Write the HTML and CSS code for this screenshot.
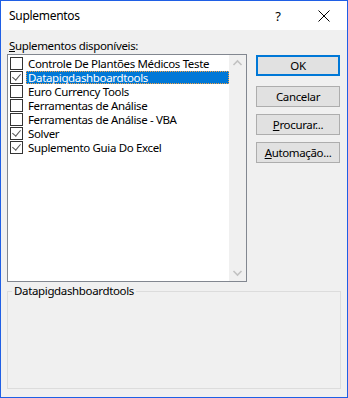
FILE: index.html
```html
<!doctype html>
<html lang="pt-br">
  <head>
    <meta charset="utf-8">
    <title>Suplementos</title>
    <link rel="stylesheet" href="styles.css">
  </head>
  <body>
	<div class="window">
		<div class="titlebar">
			<span class="title">Suplementos</span>
			<span class="help">?</span>
			<span class="close">
				<svg width="12" height="12" viewBox="0 0 12 12"><path d="M0.5 0.5 L11.5 11.5 M11.5 0.5 L0.5 11.5" stroke="#000" stroke-width="1" fill="none"/></svg>
			</span>
		</div>
		<div class="content">
			<div class="main">
				<div class="left">
					<div class="label"><u>S</u>uplementos disponíveis:</div>
					<div class="list">
						<div class="items">
							<div class="item"><span class="box"></span><span class="text">Controle De Plantões Médicos Teste</span></div>
							<div class="item selected"><span class="box checked"></span><span class="text">Datapigdashboardtools</span></div>
							<div class="item"><span class="box"></span><span class="text">Euro Currency Tools</span></div>
							<div class="item"><span class="box"></span><span class="text">Ferramentas de Análise</span></div>
							<div class="item"><span class="box"></span><span class="text">Ferramentas de Análise - VBA</span></div>
							<div class="item"><span class="box checked"></span><span class="text">Solver</span></div>
							<div class="item"><span class="box checked"></span><span class="text">Suplemento Guia Do Excel</span></div>
						</div>
						<div class="scrollbar">
							<svg width="17" height="17" viewBox="0 0 17 17"><path d="M4.5 10 L8.5 6 L12.5 10" stroke="#c2c2c2" stroke-width="1.6" fill="none"/></svg>
							<svg width="17" height="17" viewBox="0 0 17 17"><path d="M4.5 7 L8.5 11 L12.5 7" stroke="#c2c2c2" stroke-width="1.6" fill="none"/></svg>
						</div>
					</div>
				</div>
				<div class="buttons">
					<div class="button default">OK</div>
					<div class="button">Cancelar</div>
					<div class="button"><u>P</u>rocurar...</div>
					<div class="button"><u>A</u>utomação...</div>
				</div>
			</div>
			<fieldset class="group">
				<legend>Datapigdashboardtools</legend>
			</fieldset>
		</div>
	</div>
  </body>
</html>
```
FILE: styles.css
```css
body
{
	margin: 0;
	font-family: "Noto Sans", "DejaVu Sans", sans-serif;
	font-size: 11.5px;
	letter-spacing: -0.35px;
	color: #000;
}

.window
{
	width: 348px;
	height: 398px;
	box-sizing: border-box;
	border: 1px solid #1f5fe5;
	background: #f0f0f0;
}

.titlebar
{
	height: 29px;
	background: #fff;
	display: flex;
	align-items: center;
	padding-left: 8px;
}

.title
{
	flex: 1;
	font-size: 12px;
	letter-spacing: -0.3px;
}

.help
{
	width: 46px;
	text-align: center;
	font-size: 13px;
}

.close
{
	width: 46px;
	display: flex;
	justify-content: center;
}

.content
{
	padding: 8px 6px 0 6px;
}

.main
{
	display: flex;
	gap: 9px;
}

.label
{
	line-height: 16px;
	padding-left: 2px;
}

.list
{
	width: 240px;
	height: 228px;
	box-sizing: border-box;
	border: 1px solid #828790;
	background: #fff;
	display: flex;
}

.items
{
	flex: 1;
	padding-top: 1px;
}

.item
{
	height: 14px;
	display: flex;
	align-items: center;
	padding-left: 2px;
}

.box
{
	width: 11px;
	height: 11px;
	border: 1px solid #333;
	background: #fff;
	position: relative;
	flex: none;
}

.box.checked::after
{
	content: "";
	position: absolute;
	left: 3px;
	top: 0px;
	width: 4px;
	height: 7px;
	border-right: 1.5px solid #555;
	border-bottom: 1.5px solid #555;
	transform: rotate(40deg);
}

.text
{
	margin-left: 3px;
	padding: 0 1px;
	line-height: 11px;
	height: 11px;
	white-space: nowrap;
	border: 1px solid transparent;
	flex: 1;
}

.selected .text
{
	background: #0078d7;
	color: #fff;
	border: 1px dotted #f5a142;
}

.scrollbar
{
	width: 17px;
	background: #f0f0f0;
	display: flex;
	flex-direction: column;
	justify-content: space-between;
}

.buttons
{
	padding-top: 17px;
	display: flex;
	flex-direction: column;
	gap: 7px;
}

.button
{
	width: 84px;
	height: 21px;
	box-sizing: border-box;
	border: 1px solid #adadad;
	background: #e1e1e1;
	text-align: center;
	line-height: 19px;
}

.button.default
{
	border: 2px solid #0078d7;
	line-height: 17px;
	margin-bottom: 3px;
}

.group
{
	margin: 2px 0 0 0;
	padding: 0;
	box-sizing: border-box;
	height: 105px;
	border: 1px solid #dcdcdc;
}

.group legend
{
	margin-left: 4px;
	padding: 0 2px;
	line-height: 14px;
}
```
